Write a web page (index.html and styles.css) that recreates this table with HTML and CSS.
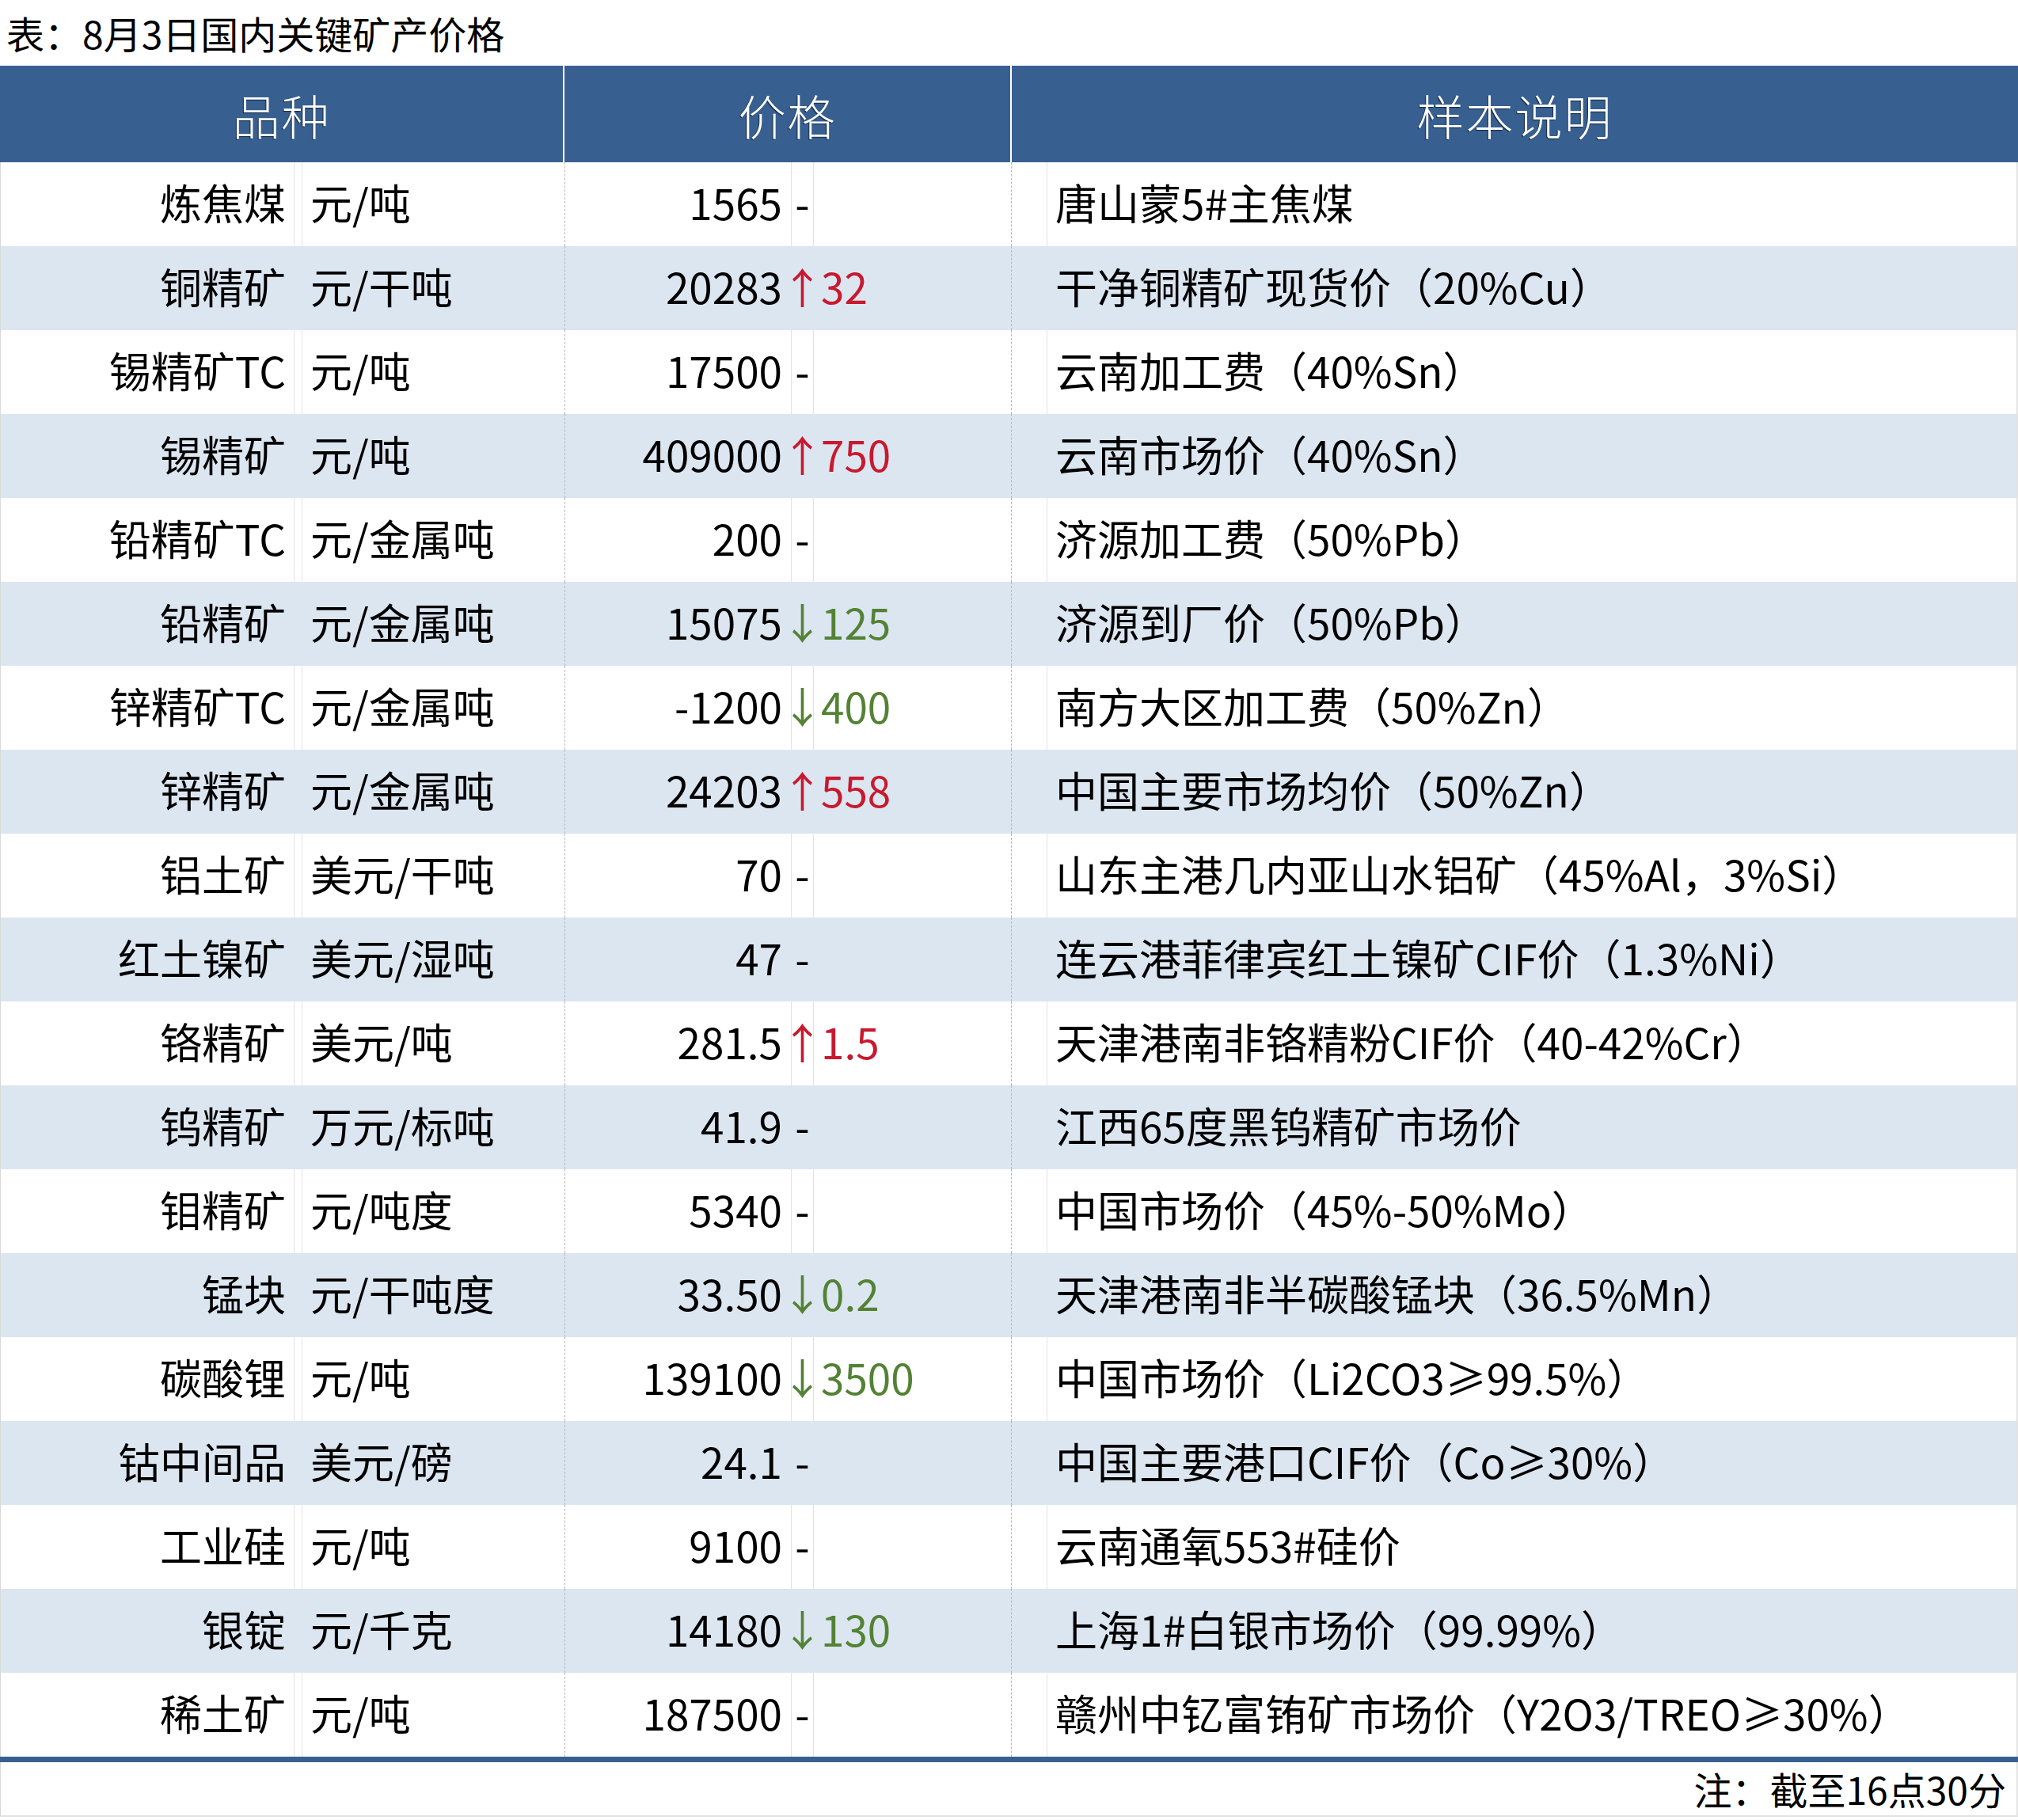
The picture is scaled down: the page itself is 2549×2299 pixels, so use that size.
FILE: index.html
```html
<!DOCTYPE html>
<html lang="zh-CN">
<head>
<meta charset="utf-8">
<title>8月3日国内关键矿产价格</title>
<link rel="stylesheet" href="styles.css">
</head>
<body>
<div class="title">表：8月3日国内关键矿产价格</div>
<div class="sheet">
  <div class="head">
    <div class="hc">品种</div>
    <div class="hc sep">价格</div>
    <div class="hc sep">样本说明</div>
  </div>
  <div class="row"><div class="c name">炼焦煤</div><div class="c gap"></div><div class="c unit">元/吨</div><div class="c price">1565</div><div class="c arr">-</div><div class="c chg"></div><div class="c pad"></div><div class="c desc">唐山蒙5#主焦煤</div></div>
  <div class="row alt"><div class="c name">铜精矿</div><div class="c gap"></div><div class="c unit">元/干吨</div><div class="c price">20283</div><div class="c arr up">↑</div><div class="c chg up">32</div><div class="c pad"></div><div class="c desc">干净铜精矿现货价（20%Cu）</div></div>
  <div class="row"><div class="c name">锡精矿TC</div><div class="c gap"></div><div class="c unit">元/吨</div><div class="c price">17500</div><div class="c arr">-</div><div class="c chg"></div><div class="c pad"></div><div class="c desc">云南加工费（40%Sn）</div></div>
  <div class="row alt"><div class="c name">锡精矿</div><div class="c gap"></div><div class="c unit">元/吨</div><div class="c price">409000</div><div class="c arr up">↑</div><div class="c chg up">750</div><div class="c pad"></div><div class="c desc">云南市场价（40%Sn）</div></div>
  <div class="row"><div class="c name">铅精矿TC</div><div class="c gap"></div><div class="c unit">元/金属吨</div><div class="c price">200</div><div class="c arr">-</div><div class="c chg"></div><div class="c pad"></div><div class="c desc">济源加工费（50%Pb）</div></div>
  <div class="row alt"><div class="c name">铅精矿</div><div class="c gap"></div><div class="c unit">元/金属吨</div><div class="c price">15075</div><div class="c arr down">↓</div><div class="c chg down">125</div><div class="c pad"></div><div class="c desc">济源到厂价（50%Pb）</div></div>
  <div class="row"><div class="c name">锌精矿TC</div><div class="c gap"></div><div class="c unit">元/金属吨</div><div class="c price">-1200</div><div class="c arr down">↓</div><div class="c chg down">400</div><div class="c pad"></div><div class="c desc">南方大区加工费（50%Zn）</div></div>
  <div class="row alt"><div class="c name">锌精矿</div><div class="c gap"></div><div class="c unit">元/金属吨</div><div class="c price">24203</div><div class="c arr up">↑</div><div class="c chg up">558</div><div class="c pad"></div><div class="c desc">中国主要市场均价（50%Zn）</div></div>
  <div class="row"><div class="c name">铝土矿</div><div class="c gap"></div><div class="c unit">美元/干吨</div><div class="c price">70</div><div class="c arr">-</div><div class="c chg"></div><div class="c pad"></div><div class="c desc">山东主港几内亚山水铝矿（45%Al，3%Si）</div></div>
  <div class="row alt"><div class="c name">红土镍矿</div><div class="c gap"></div><div class="c unit">美元/湿吨</div><div class="c price">47</div><div class="c arr">-</div><div class="c chg"></div><div class="c pad"></div><div class="c desc">连云港菲律宾红土镍矿CIF价（1.3%Ni）</div></div>
  <div class="row"><div class="c name">铬精矿</div><div class="c gap"></div><div class="c unit">美元/吨</div><div class="c price">281.5</div><div class="c arr up">↑</div><div class="c chg up">1.5</div><div class="c pad"></div><div class="c desc">天津港南非铬精粉CIF价（40-42%Cr）</div></div>
  <div class="row alt"><div class="c name">钨精矿</div><div class="c gap"></div><div class="c unit">万元/标吨</div><div class="c price">41.9</div><div class="c arr">-</div><div class="c chg"></div><div class="c pad"></div><div class="c desc">江西65度黑钨精矿市场价</div></div>
  <div class="row"><div class="c name">钼精矿</div><div class="c gap"></div><div class="c unit">元/吨度</div><div class="c price">5340</div><div class="c arr">-</div><div class="c chg"></div><div class="c pad"></div><div class="c desc">中国市场价（45%-50%Mo）</div></div>
  <div class="row alt"><div class="c name">锰块</div><div class="c gap"></div><div class="c unit">元/干吨度</div><div class="c price">33.50</div><div class="c arr down">↓</div><div class="c chg down">0.2</div><div class="c pad"></div><div class="c desc">天津港南非半碳酸锰块（36.5%Mn）</div></div>
  <div class="row"><div class="c name">碳酸锂</div><div class="c gap"></div><div class="c unit">元/吨</div><div class="c price">139100</div><div class="c arr down">↓</div><div class="c chg down">3500</div><div class="c pad"></div><div class="c desc">中国市场价（Li2CO3≥99.5%）</div></div>
  <div class="row alt"><div class="c name">钴中间品</div><div class="c gap"></div><div class="c unit">美元/磅</div><div class="c price">24.1</div><div class="c arr">-</div><div class="c chg"></div><div class="c pad"></div><div class="c desc">中国主要港口CIF价（Co≥30%）</div></div>
  <div class="row"><div class="c name">工业硅</div><div class="c gap"></div><div class="c unit">元/吨</div><div class="c price">9100</div><div class="c arr">-</div><div class="c chg"></div><div class="c pad"></div><div class="c desc">云南通氧553#硅价</div></div>
  <div class="row alt"><div class="c name">银锭</div><div class="c gap"></div><div class="c unit">元/千克</div><div class="c price">14180</div><div class="c arr down">↓</div><div class="c chg down">130</div><div class="c pad"></div><div class="c desc">上海1#白银市场价（99.99%）</div></div>
  <div class="row"><div class="c name">稀土矿</div><div class="c gap"></div><div class="c unit">元/吨</div><div class="c price">187500</div><div class="c arr">-</div><div class="c chg"></div><div class="c pad"></div><div class="c desc">赣州中钇富铕矿市场价（Y2O3/TREO≥30%）</div></div>
  <div class="foot">注：截至16点30分</div>
</div>
</body>
</html>
```
FILE: styles.css
```css
* { box-sizing: border-box; }
html, body { margin: 0; padding: 0; background: #fff; }
body {
  width: 2549px;
  font-family: "Noto Sans CJK SC", "Noto Sans", sans-serif;
  color: #000;
}
.title {
  height: 83px;
  padding: 17px 0 0 8px;
  font-size: 48px;
  line-height: 48px;
  white-space: nowrap;
}
.sheet {
  border-left: 1px solid #d9d9d9;
  border-right: 2px solid #e3e3e3;
  border-bottom: 2px solid #e3e3e3;
}
.head {
  display: grid;
  grid-template-columns: 711px 565px 1fr;
  height: 122px;
  background: #376091;
  margin-left: -1px;
  margin-right: -2px;
}
.hc {
  display: flex;
  align-items: center;
  justify-content: center;
  padding-top: 2px;
  color: #fff;
  font-size: 60px;
  font-weight: 300;
  line-height: 60px;
  letter-spacing: 2px;
  text-shadow: -1px 1px 1px rgba(0, 0, 0, 0.6);
}
.hc.sep { border-left: 2px solid #fff; }
.row {
  display: grid;
  grid-template-columns: 370px 10px 332px 286px 28px 250px 45px 1fr;
  height: 106px;
  font-size: 53px;
  line-height: 53px;
  background: #fff;
}
.row.alt { background: #dce6f1; }
.c {
  display: flex;
  align-items: center;
  white-space: nowrap;
  padding-bottom: 6px;
}
.gap, .unit, .arr, .chg, .desc { border-left: 1px solid #e2e2e2; }
.row.alt .gap, .row.alt .unit, .row.alt .arr, .row.alt .chg, .row.alt .desc { border-left-color: transparent; }
.price, .pad { border-left: 1px dashed #b8b8b8; }
.name { justify-content: flex-end; padding-right: 10px; }
.unit { padding-left: 10px; }
.price { justify-content: flex-end; padding-right: 11px; }
.arr { justify-content: center; overflow: visible; }
.chg { padding-left: 9px; }
.desc { padding-left: 10px; }
.up { color: #c8192e; }
.down { color: #548235; }
.foot {
  border-top: 7px solid #376091;
  margin-left: -1px;
  margin-right: -2px;
  height: 74px;
  padding: 0 15px 2px 0;
  display: flex;
  align-items: center;
  justify-content: flex-end;
  font-size: 48px;
  line-height: 48px;
}
```
